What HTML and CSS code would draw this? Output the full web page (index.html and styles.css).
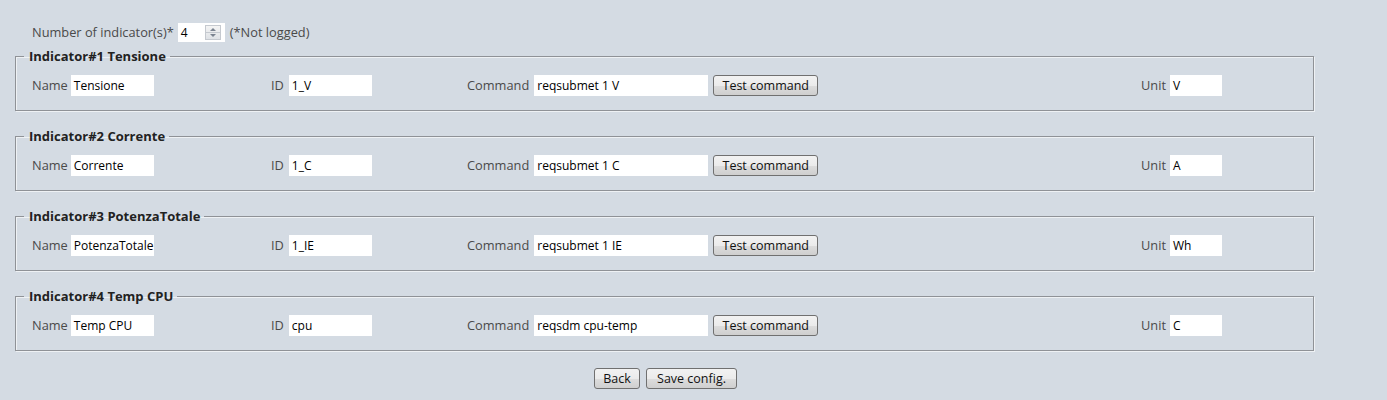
FILE: index.html
```html
<!DOCTYPE html>
<html>
<head>
<meta charset="utf-8">
<link rel="stylesheet" href="styles.css">
</head>
<body>
<div class="page">
  <div class="count-row">
    <span class="lbl">Number of indicator(s)*</span>
    <span class="num-box"><span class="num-val">4</span><span class="spin"><span class="up"></span><span class="dn"></span></span></span>
    <span class="lbl">(*Not logged)</span>
  </div>

  <fieldset class="ind">
    <legend>Indicator#1 Tensione</legend>
    <div class="row">
      <div class="c c1"><span class="lbl">Name</span><span class="inp w-name">Tensione</span></div>
      <div class="c c2"><span class="lbl">ID</span><span class="inp w-id">1_V</span></div>
      <div class="c c3"><span class="lbl">Command</span><span class="inp w-cmd">reqsubmet 1 V</span><button class="btn">Test command</button></div>
      <div class="c c4"><span class="lbl">Unit</span><span class="inp w-unit">V</span></div>
    </div>
  </fieldset>

  <fieldset class="ind">
    <legend>Indicator#2 Corrente</legend>
    <div class="row">
      <div class="c c1"><span class="lbl">Name</span><span class="inp w-name">Corrente</span></div>
      <div class="c c2"><span class="lbl">ID</span><span class="inp w-id">1_C</span></div>
      <div class="c c3"><span class="lbl">Command</span><span class="inp w-cmd">reqsubmet 1 C</span><button class="btn">Test command</button></div>
      <div class="c c4"><span class="lbl">Unit</span><span class="inp w-unit">A</span></div>
    </div>
  </fieldset>

  <fieldset class="ind">
    <legend>Indicator#3 PotenzaTotale</legend>
    <div class="row">
      <div class="c c1"><span class="lbl">Name</span><span class="inp w-name">PotenzaTotale</span></div>
      <div class="c c2"><span class="lbl">ID</span><span class="inp w-id">1_IE</span></div>
      <div class="c c3"><span class="lbl">Command</span><span class="inp w-cmd">reqsubmet 1 IE</span><button class="btn">Test command</button></div>
      <div class="c c4"><span class="lbl">Unit</span><span class="inp w-unit">Wh</span></div>
    </div>
  </fieldset>

  <fieldset class="ind">
    <legend>Indicator#4 Temp CPU</legend>
    <div class="row">
      <div class="c c1"><span class="lbl">Name</span><span class="inp w-name">Temp CPU</span></div>
      <div class="c c2"><span class="lbl">ID</span><span class="inp w-id">cpu</span></div>
      <div class="c c3"><span class="lbl">Command</span><span class="inp w-cmd">reqsdm cpu-temp</span><button class="btn">Test command</button></div>
      <div class="c c4"><span class="lbl">Unit</span><span class="inp w-unit">C</span></div>
    </div>
  </fieldset>

  <div class="actions">
    <button class="btn btn-back">Back</button>
    <button class="btn btn-save">Save config.</button>
  </div>
</div>
</body>
</html>
```

FILE: styles.css
```css
html, body {
  margin: 0;
  padding: 0;
  background: #d4dbe3;
}
body {
  font-family: "Open Sans", "DejaVu Sans", sans-serif;
  font-size: 12px;
  color: #3c3c3c;
}
.page {
  width: 1387px;
  padding-top: 22px;
}
.count-row {
  display: flex;
  align-items: center;
  height: 20px;
  padding-left: 32px;
}
.lbl {
  color: #4a4a4a;
  white-space: nowrap;
  font-size: 12.8px;
}
.num-box {
  display: flex;
  align-items: center;
  width: 47px;
  height: 19px;
  margin: 0 5px 0 4px;
  background: #fff;
  box-sizing: border-box;
}
.num-val {
  flex: 1;
  padding-left: 3px;
  color: #000;
}
.spin {
  display: flex;
  flex-direction: column;
  width: 16px;
  height: 15px;
  margin-right: 4px;
  border: 1px solid #c5c9cf;
  box-sizing: border-box;
  background: linear-gradient(#f4f4f4, #dfe2e6);
}
.spin .up, .spin .dn {
  flex: 1;
  position: relative;
}
.spin .up { border-bottom: 1px solid #c5c9cf; }
.spin .up::after, .spin .dn::after {
  content: "";
  position: absolute;
  left: 4px;
  top: 2px;
  border-left: 3px solid transparent;
  border-right: 3px solid transparent;
}
.spin .up::after { border-bottom: 3px solid #7b8390; }
.spin .dn::after { border-top: 3px solid #7b8390; top: 1px; }

fieldset.ind {
  margin: 5px 73px 0 15px;
  padding: 9px 0 14px 0;
  border: 1px solid #8f9297;
  box-shadow: 1px 1px 0 #eef1f4, inset 1px 1px 0 #eef1f4;
  min-width: 0;
}
fieldset.ind + fieldset.ind {
  margin-top: 16px;
}
legend {
  margin-left: 8px;
  padding: 0 4px 0 5px;
  font-weight: bold;
  font-size: 13px;
  color: #222;
}
.row {
  display: flex;
  align-items: center;
  height: 22px;
}
.c {
  display: flex;
  align-items: center;
}
.c1 { width: 239px; padding-left: 16px; }
.c2 { width: 196px; }
.c3 { width: 674px; }
.c4 { flex: 1; }
.c .lbl { margin-right: 3px; }
.c2 .lbl { margin-right: 5px; }
.c3 .lbl { margin-right: 5px; }
.c4 .lbl { margin-right: 4px; }
.inp {
  display: block;
  height: 21px;
  line-height: 21px;
  padding-left: 3px;
  box-sizing: border-box;
  background: #fff;
  color: #000;
  overflow: hidden;
  white-space: nowrap;
}
.w-name { width: 83px; }
.w-id { width: 83px; }
.w-cmd { width: 174px; }
.w-unit { width: 52px; }
.btn {
  font-family: "Open Sans", "DejaVu Sans", sans-serif;
  font-size: 12.5px;
  color: #111;
  height: 21px;
  padding: 0 8px;
  border: 1px solid #707070;
  border-radius: 3px;
  background: linear-gradient(#f2f2f2 0%, #ebebeb 50%, #dddddd 51%, #cfcfcf 100%);
  line-height: 19px;
}
.c3 .btn { margin-left: 5px; width: 105px; }
.btn-back { width: 46px; padding: 0; }
.btn-save { width: 91px; padding: 0; }
.actions {
  display: flex;
  justify-content: center;
  gap: 6px;
  margin-top: 17px;
  padding-right: 56px;
}
```
